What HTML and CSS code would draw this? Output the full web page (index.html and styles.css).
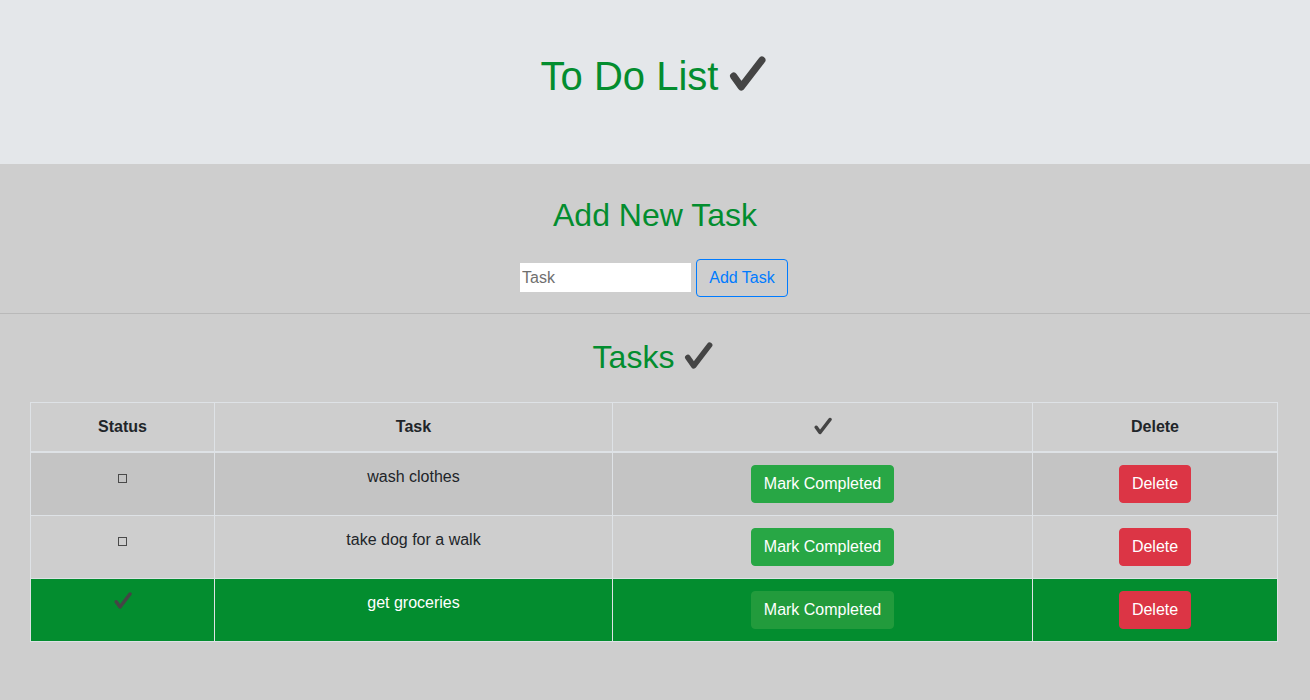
FILE: index.html
```html
<!DOCTYPE html>
<html lang="en">
<head>
<meta charset="utf-8">
<title>To Do List</title>
<link rel="stylesheet" href="styles.css">
</head>
<body>
<header class="hero">
  <h1 class="title">To Do List <svg class="check check-lg" viewBox="0 0 36 34"><path d="M4.5 19.5 L12 30 L32 4"/></svg></h1>
</header>
<section class="add">
  <h2 class="section-title">Add New Task</h2>
  <form class="add-form">
    <input class="task-input" type="text" placeholder="Task">
    <button class="btn btn-outline" type="button">Add Task</button>
  </form>
</section>
<hr class="divider">
<section class="tasks">
  <h2 class="section-title tasks-title">Tasks <svg class="check check-md" viewBox="0 0 36 34"><path d="M4.5 19.5 L12 30 L32 4"/></svg></h2>
  <table class="task-table">
    <colgroup>
      <col class="c1"><col class="c2"><col class="c3"><col class="c4">
    </colgroup>
    <thead>
      <tr>
        <th>Status</th>
        <th>Task</th>
        <th><svg class="check check-sm" viewBox="0 0 36 34"><path d="M4.5 19.5 L12 30 L32 4"/></svg></th>
        <th>Delete</th>
      </tr>
    </thead>
    <tbody>
      <tr class="striped">
        <td><span class="box"></span></td>
        <td>wash clothes</td>
        <td><button class="btn btn-success" type="button">Mark Completed</button></td>
        <td><button class="btn btn-danger" type="button">Delete</button></td>
      </tr>
      <tr>
        <td><span class="box"></span></td>
        <td>take dog for a walk</td>
        <td><button class="btn btn-success" type="button">Mark Completed</button></td>
        <td><button class="btn btn-danger" type="button">Delete</button></td>
      </tr>
      <tr class="done">
        <td><svg class="check check-row" viewBox="0 0 36 34"><path d="M4.5 19.5 L12 30 L32 4"/></svg></td>
        <td>get groceries</td>
        <td><button class="btn btn-success btn-faded" type="button">Mark Completed</button></td>
        <td><button class="btn btn-danger" type="button">Delete</button></td>
      </tr>
    </tbody>
  </table>
</section>
</body>
</html>
```
FILE: styles.css
```css
* { box-sizing: border-box; }
html, body { margin: 0; padding: 0; }
body {
  background: #cecece;
  font-family: "Liberation Sans", Arial, sans-serif;
  font-size: 16px;
  line-height: 1.5;
  color: #212529;
  height: 700px;
}
.hero {
  background: #e4e7ea;
  height: 164px;
  padding-bottom: 12px;
  display: flex;
  align-items: center;
  justify-content: center;
}
.title {
  margin: 0 0 0 -3px;
  font-size: 40px;
  font-weight: 400;
  line-height: 1.2;
  color: #038d2f;
  display: flex;
  align-items: center;
  gap: 11px;
}
.check path {
  fill: none;
  stroke: #454545;
  stroke-width: 7;
  stroke-linecap: round;
  stroke-linejoin: round;
}
.check-lg { width: 37px; height: 35px; margin-top: -6px; }
.check-md { width: 29px; height: 27px; margin-top: -4px; }
.check-sm { width: 18px; height: 18px; vertical-align: -3px; }
.check-row { width: 18px; height: 17px; vertical-align: -1px; }
.add {
  padding-top: 32px;
  text-align: center;
}
.section-title {
  margin: 0 0 25px;
  font-size: 32px;
  font-weight: 400;
  line-height: 1.2;
  color: #038d2f;
}
.add-form {
  display: flex;
  justify-content: center;
  align-items: center;
  gap: 5px;
  padding-bottom: 16px;
  margin-left: -2px;
}
.task-input {
  width: 171px;
  height: 29px;
  border: none;
  background: #fff;
  padding: 1px 2px;
  font-family: "Liberation Sans", Arial, sans-serif;
  font-size: 16px;
  color: #212529;
  margin-top: -1px;
}
.task-input::placeholder { color: #6f6f6f; }
.btn {
  font-family: "Liberation Sans", Arial, sans-serif;
  font-size: 16px;
  line-height: 1.5;
  padding: 6px 12px;
  border-radius: 4px;
  border: 1px solid transparent;
  cursor: pointer;
}
.btn-outline {
  background: transparent;
  border-color: #007bff;
  color: #007bff;
  width: 92px;
  height: 38px;
  padding: 6px 0;
}
.btn-success { background: #28a745; border-color: #28a745; color: #fff; }
.btn-faded { background: #229b3c; border-color: #229b3c; }
.btn-danger { background: #dc3545; border-color: #dc3545; color: #fff; }
.divider {
  margin: 0;
  border: 0;
  border-top: 1px solid #b9b9b9;
}
.tasks { padding-top: 24px; text-align: center; }
.tasks-title {
  display: flex;
  justify-content: center;
  align-items: center;
  gap: 10px;
  margin-bottom: 25px;
  margin-left: -4px;
}
.task-table {
  margin-left: 30px;
  width: 1247px;
  border-collapse: collapse;
  table-layout: fixed;
}
.c1 { width: 184px; }
.c2 { width: 398px; }
.c3 { width: 420px; }
.c4 { width: 245px; }
.task-table th, .task-table td {
  border: 1px solid #dee2e6;
  padding: 12px;
  vertical-align: top;
  text-align: center;
}
.task-table thead th {
  border-bottom: 2px solid #dee2e6;
  font-weight: 700;
  height: 50px;
}
.striped { background: #c4c4c4; }
.done { background: #038d2f; color: #fff; }
.box {
  display: inline-block;
  width: 9px;
  height: 9px;
  border: 1px solid #4a4a4a;
  vertical-align: -1px;
}
```
